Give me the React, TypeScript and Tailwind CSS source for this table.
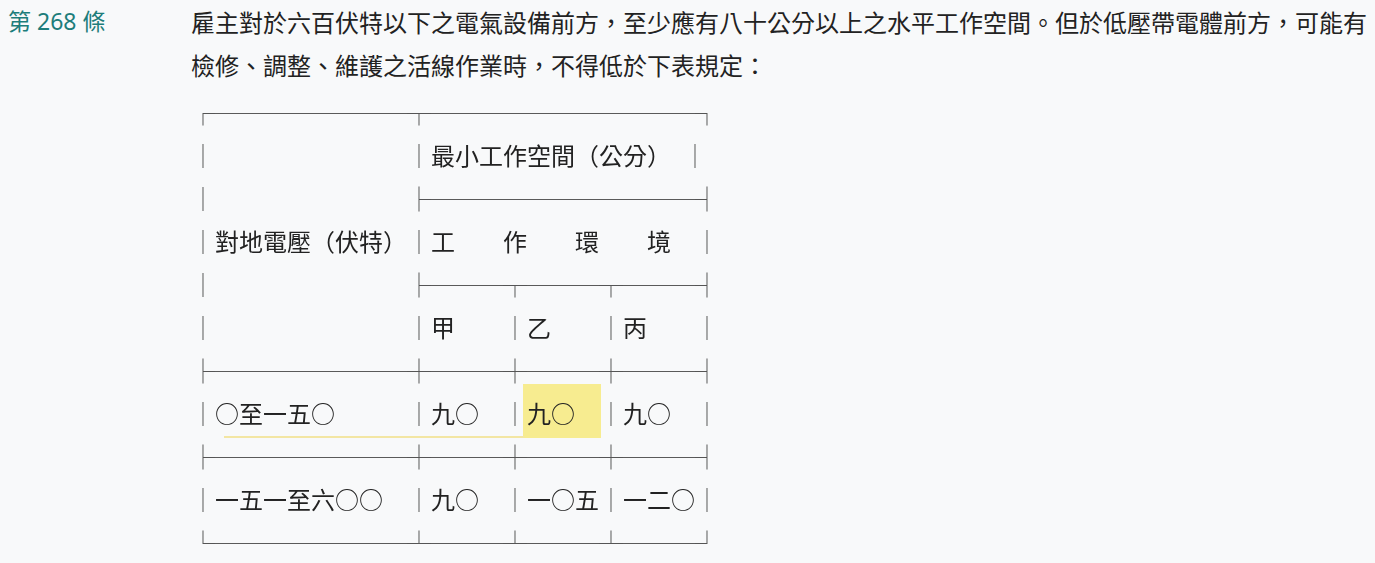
import React from "react";

const lines = [
  "┌────────┬───────────┐",
  "│　　　　　　　　│最小工作空間（公分）　│",
  "│　　　　　　　　├───────────┤",
  "│對地電壓（伏特）│工　　作　　環　　境　│",
  "│　　　　　　　　├───┬───┬───┤",
  "│　　　　　　　　│甲　　│乙　　│丙　　│",
  "├────────┼───┼───┼───┤",
  "│○至一五○　　　│九○　│九○　│九○　│",
  "├────────┼───┼───┼───┤",
  "│一五一至六○○　│九○　│一○五│一二○│",
  "└────────┴───┴───┴───┘",
];

function Line({ text }: { text: string }) {
  const parts = text.split(/([\u2500-\u257F]+)/);
  return (
    <div>
      {parts.map((p, i) =>
        /^[\u2500-\u257F]+$/.test(p) ? (
          <span key={i} className="text-[#555555]">
            {p}
          </span>
        ) : (
          <span key={i}>{p}</span>
        )
      )}
    </div>
  );
}

export default function App() {
  return (
    <div className="antialiased min-h-screen w-full bg-[#f8f9fa] flex text-[#222222] [font-family:'Noto_Sans_CJK_TC','Noto_Sans',sans-serif]">
      <div className="w-[191px] shrink-0 pl-[8px] text-[23px] leading-[43px] text-[#1d7d7b] [font-family:'Noto_Sans','Noto_Sans_CJK_TC',sans-serif]">
        第 268 條
      </div>
      <div className="flex-1 min-w-0">
        <p className="text-[24px] leading-[43px]">
          雇主對於六百伏特以下之電氣設備前方，至少應有八十公分以上之水平工作空間。但於低壓帶電體前方，可能有檢修、調整、維護之活線作業時，不得低於下表規定：
        </p>
        <div className="relative mt-[4px]">
          <div className="absolute left-[332px] top-[294px] w-[78px] h-[54px] bg-[#f7ec90]" />
          <div className="absolute left-[33px] top-[346px] w-[300px] h-[2px] bg-[#f3e6a3]" />
          <pre className="relative will-change-transform text-[24px] leading-[43px] whitespace-pre [font-family:'Noto_Sans_CJK_TC',sans-serif] text-[#222222]">
            {lines.map((l, i) => (
              <Line key={i} text={l} />
            ))}
          </pre>
        </div>
      </div>
    </div>
  );
}
